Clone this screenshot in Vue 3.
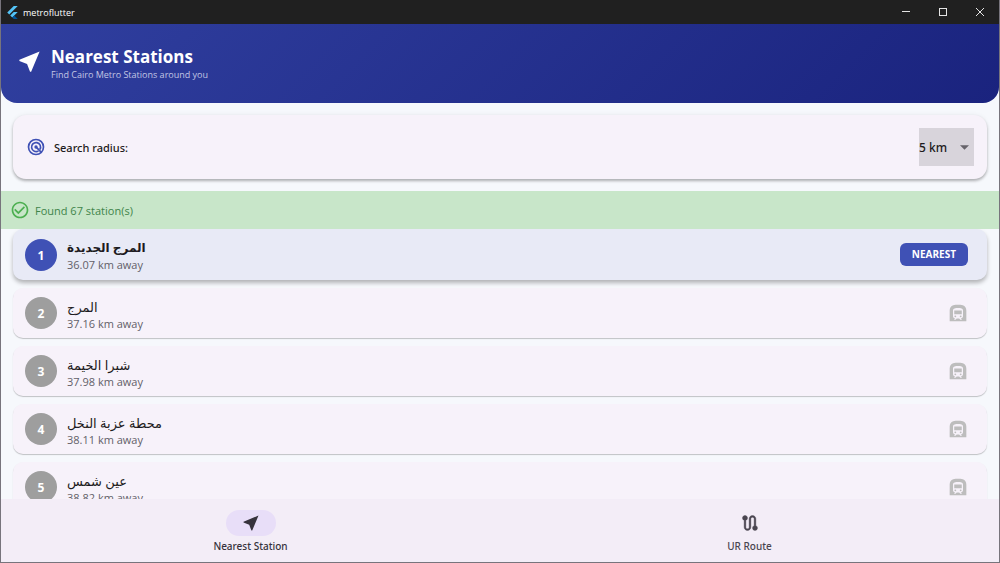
<script setup>
import { ref } from 'vue'

const radius = ref('5')
const stations = [
  { name: 'المرج الجديدة', km: '36.07' },
  { name: 'المرج', km: '37.16' },
  { name: 'شبرا الخيمة', km: '37.98' },
  { name: 'محطة عزبة النخل', km: '38.11' },
  { name: 'عين شمس', km: '38.82' },
]
</script>

<template>
  <div class="window">
    <header class="titlebar">
      <svg class="logo" viewBox="0 0 24 24" aria-hidden="true">
        <path fill="#54c5f8" d="M14.3 0 2.3 12 6 15.7 21.7 0z" />
        <path fill="#54c5f8" d="M14.3 11.1 7.8 17.5l3.7 3.8 3.7-3.8 6.5-6.4z" />
        <path fill="#01579b" d="m11.5 21.3 2.8 2.7h7.4l-6.5-6.5z" />
      </svg>
      <span class="app-name">metroflutter</span>
      <div class="controls">
        <button aria-label="Minimize"><svg viewBox="0 0 10 10"><path d="M1 4.5h8" /></svg></button>
        <button aria-label="Maximize"><svg viewBox="0 0 10 10"><rect x="1.5" y="1.5" width="7" height="7" /></svg></button>
        <button aria-label="Close"><svg viewBox="0 0 10 10"><path d="m1 1 8 8m0-8-8 8" /></svg></button>
      </div>
    </header>

    <main class="content">
      <section class="hero">
        <svg class="hero-icon" viewBox="0 0 24 24" aria-hidden="true"><path d="M21 3 3 10.53v.98l6.84 2.65L12.48 21h.98z" /></svg>
        <div>
          <h1>Nearest Stations</h1>
          <p>Find Cairo Metro Stations around you</p>
        </div>
      </section>

      <section class="search">
        <svg class="radar" viewBox="0 0 24 24" aria-hidden="true">
          <circle cx="12" cy="12" r="9" />
          <path d="M15 16.6a5.4 5.4 0 1 1 1.6-1.6" />
          <path d="m12.5 12.5 6 6" />
          <circle class="dot" cx="12" cy="12" r="2" />
        </svg>
        <label for="radius">Search radius:</label>
        <div class="picker">
          <select id="radius" v-model="radius">
            <option value="5">5 km</option>
            <option value="10">10 km</option>
            <option value="20">20 km</option>
          </select>
          <svg class="caret" viewBox="0 0 10 5" aria-hidden="true"><path d="m0 0 5 5 5-5z" /></svg>
        </div>
      </section>

      <div class="found" role="status">
        <svg viewBox="0 0 24 24" aria-hidden="true"><path d="M16.59 7.58 10 14.17l-3.59-3.58L5 12l5 5 8-8zM12 2C6.48 2 2 6.48 2 12s4.48 10 10 10 10-4.48 10-10S17.52 2 12 2zm0 18c-4.42 0-8-3.58-8-8s3.58-8 8-8 8 3.58 8 8-3.58 8-8 8z" /></svg>
        <span>Found 67 station(s)</span>
      </div>

      <ol class="stations">
        <li v-for="(s, i) in stations" :key="s.name" :class="{ nearest: i === 0 }">
          <span class="number">{{ i + 1 }}</span>
          <div class="info">
            <span class="name" lang="ar">{{ s.name }}</span>
            <span class="distance">{{ s.km }} km away</span>
          </div>
          <span v-if="i === 0" class="badge">NEAREST</span>
          <svg v-else class="train" viewBox="0 0 24 24" aria-hidden="true">
            <path fill-rule="evenodd" d="M17.8 2.8C16 2.09 13.86 2 12 2s-4 .09-5.8.8C3.53 3.84 2 6.05 2 8.86V22h20V8.86c0-2.81-1.53-5.02-4.2-6.06zM18 15.88c0 1.45-1.18 2.62-2.63 2.62L16.5 19.62V20h-1.67l-1.5-1.5h-2.83L9 20H7.5v-.38l1.12-1.12C7.18 18.5 6 17.32 6 15.88V9c0-2.63 3-3 6-3 3.32 0 6 .38 6 3z" />
            <path d="M7.5 9h9v4.5h-9z" />
            <circle cx="8.8" cy="16" r="1.1" /><circle cx="15.2" cy="16" r="1.1" />
          </svg>
        </li>
      </ol>
    </main>

    <nav class="tabs">
      <button class="tab active" aria-current="page">
        <span class="pill"><svg viewBox="0 0 24 24" aria-hidden="true"><path d="M21 3 3 10.53v.98l6.84 2.65L12.48 21h.98z" /></svg></span>
        <span>Nearest Station</span>
      </button>
      <button class="tab">
        <span class="pill"><svg class="route" viewBox="0 0 24 24" aria-hidden="true"><path d="M19 15.18V7c0-2.21-1.79-4-4-4s-4 1.79-4 4v10c0 1.1-.9 2-2 2s-2-.9-2-2V8.82C8.16 8.4 9 7.3 9 6c0-1.66-1.34-3-3-3S3 4.34 3 6c0 1.3.84 2.4 2 2.82V17c0 2.21 1.79 4 4 4s4-1.79 4-4V7c0-1.1.9-2 2-2s2 .9 2 2v8.18A3 3 0 0 0 18 21a3 3 0 0 0 1-5.82z" /></svg></span>
        <span>UR Route</span>
      </button>
    </nav>
  </div>
</template>

<style>
body {
  margin: 0;
}
</style>

<style scoped>
.window {
  box-sizing: border-box;
  height: 100vh;
  display: flex;
  flex-direction: column;
  overflow: hidden;
  border: 1px solid #77747c;
  border-top: 0;
  background: #f6f8fc;
  color: #1d1b20;
  font-family: "Open Sans", "DejaVu Sans", sans-serif;
  font-size: 11px;
}
button {
  border: 0;
  padding: 0;
  background: none;
  color: inherit;
  font: inherit;
}
.titlebar {
  flex: none;
  height: 24px;
  display: flex;
  align-items: center;
  padding: 0 2px 0 6px;
  margin: 0 -1px;
  background: #202020;
  color: #fff;
}
.logo {
  width: 13px;
  height: 13px;
}
.app-name {
  margin-left: 4px;
  font-size: 9px;
}
.controls {
  margin-left: auto;
  display: flex;
}
.controls button {
  width: 37px;
  height: 24px;
  display: grid;
  place-items: center;
}
.controls svg {
  width: 10px;
  height: 10px;
  fill: none;
  stroke: #e4e4e4;
}
.content {
  flex: 1;
  min-height: 0;
  display: flex;
  flex-direction: column;
  overflow: hidden;
}
.hero {
  flex: none;
  height: 79px;
  display: flex;
  align-items: center;
  gap: 8px;
  padding: 0 15px;
  border-radius: 0 0 16px 16px;
  background: linear-gradient(135deg, #303f9f, #1a237e);
  color: #fff;
}
.hero-icon {
  width: 27px;
  height: 27px;
  padding-bottom: 4px;
  fill: currentColor;
}
h1 {
  margin: 0;
  font-size: 17px;
  line-height: 22px;
  font-weight: 700;
}
.hero p {
  margin: 0;
  font-size: 9px;
  line-height: 14px;
  color: #c2c6e4;
}
.search {
  flex: none;
  box-sizing: border-box;
  height: 64px;
  display: flex;
  align-items: center;
  margin: 12px 12px 12px;
  padding: 0 13px;
  border-radius: 13px;
  background: #f7f2fa;
  box-shadow: 0 2px 3px rgba(0, 0, 0, 0.28), 0 0 5px rgba(0, 0, 0, 0.06);
}
.radar {
  width: 20px;
  height: 20px;
  margin-right: 8px;
  fill: none;
  stroke: #3f51b5;
  stroke-width: 2;
}
.radar .dot {
  fill: #3f51b5;
  stroke: none;
}
.search label {
  font-family: "Noto Sans", sans-serif;
  font-weight: 500;
}
.picker {
  position: relative;
  margin-left: auto;
}
.picker select {
  appearance: none;
  display: block;
  width: 55px;
  height: 38px;
  border: 0;
  border-radius: 0;
  padding: 0;
  background: #d8d4db;
  color: inherit;
  font: 500 12px "Noto Sans", sans-serif;
}
.caret {
  position: absolute;
  right: 5px;
  top: 17px;
  width: 9px;
  height: 5px;
  fill: #66636a;
  pointer-events: none;
}
.found {
  flex: none;
  height: 38px;
  display: flex;
  align-items: center;
  gap: 5px;
  padding: 0 9px;
  background: #c8e6c9;
  color: #40844a;
}
.found svg {
  width: 20px;
  height: 20px;
  fill: #4caf50;
}
.stations {
  flex: 1;
  min-height: 0;
  overflow: hidden;
  display: flex;
  flex-direction: column;
  gap: 8px;
  margin: 0;
  padding: 0 12px;
  list-style: none;
}
.stations li {
  flex: none;
  box-sizing: border-box;
  height: 50px;
  display: flex;
  align-items: center;
  gap: 10px;
  padding: 0 19px 0 12px;
  border-radius: 10px;
  background: #f7f2fa;
  box-shadow: 0 1px 1px rgba(0, 0, 0, 0.22);
}
.stations li.nearest {
  height: 51px;
  background: #e8eaf6;
  box-shadow: 0 3px 4px rgba(0, 0, 0, 0.28);
}
.number {
  width: 32px;
  height: 32px;
  border-radius: 50%;
  background: #9e9e9e;
  color: #fff;
  font-size: 12px;
  font-weight: 700;
  line-height: 34px;
  text-align: center;
}
.nearest .number {
  background: #3f51b5;
}
.info {
  display: flex;
  flex-direction: column;
  padding-top: 4px;
}
.nearest .info {
  padding-top: 2px;
}
.name {
  font-size: 13px;
  line-height: 18px;
}
.nearest .name {
  font-size: 12px;
  font-weight: 700;
}
.distance {
  line-height: 16px;
  color: #625f68;
}
.badge {
  margin-left: auto;
  padding: 0 12px;
  border-radius: 6px;
  background: #3f51b5;
  color: #fff;
  font-size: 10px;
  font-weight: 700;
  line-height: 23px;
}
.train {
  width: 20px;
  height: 20px;
  margin-left: auto;
  fill: #bdbdbd;
}
.tabs {
  flex: none;
  height: 63px;
  display: flex;
  background: #f3edf7;
}
.tab {
  flex: 1;
  display: flex;
  flex-direction: column;
  align-items: center;
  gap: 3px;
  padding-top: 11px;
  font-family: "Noto Sans", sans-serif;
  font-size: 10px;
  font-weight: 500;
  line-height: 14px;
  color: #49454f;
}
.active {
  color: #36323c;
}
.pill {
  width: 50px;
  height: 26px;
  display: grid;
  place-items: center;
  border-radius: 13px;
}
.active .pill {
  background: #e8def8;
}
.pill svg {
  width: 20px;
  height: 20px;
  fill: currentColor;
}
.pill .route {
  stroke: currentColor;
  stroke-width: 0.5;
}
</style>
